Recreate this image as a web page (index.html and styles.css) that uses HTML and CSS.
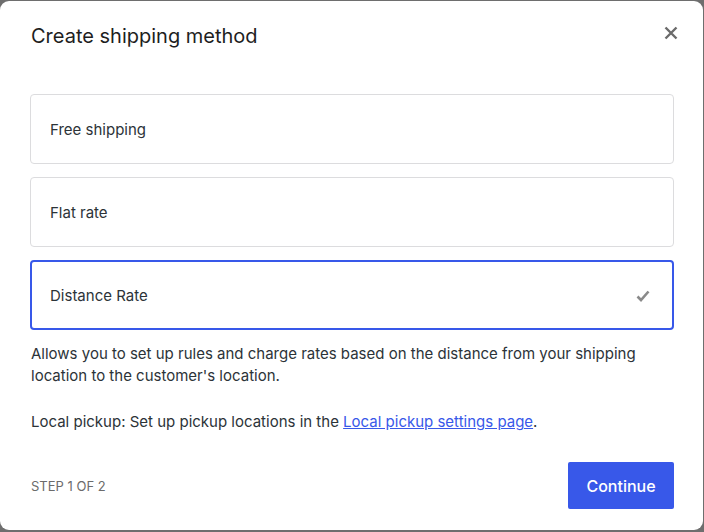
FILE: index.html
```html
<!DOCTYPE html>
<html lang="en">
<head>
<meta charset="utf-8">
<title>Create shipping method</title>
<link rel="stylesheet" href="styles.css">
</head>
<body>
<div class="modal">
  <header class="modal-header">
    <h1 class="modal-title">Create shipping method</h1>
    <button class="close" aria-label="Close">
      <svg width="24" height="24" viewBox="0 0 24 24"><path d="M6.5 6.5l11 11M17.5 6.5l-11 11" stroke="#6b6b6b" stroke-width="2.4" fill="none"/></svg>
    </button>
  </header>
  <div class="options">
    <div class="option">Free shipping</div>
    <div class="option">Flat rate</div>
    <div class="option selected">
      <span>Distance Rate</span>
      <svg class="check" width="16" height="16" viewBox="0 0 16 16"><path d="M2.5 8.5l3.5 3.5 7.5-8.5" stroke="#8a8a8a" stroke-width="2.6" fill="none"/></svg>
    </div>
  </div>
  <p class="desc">Allows you to set up rules and charge rates based on the distance from your shipping location to the customer's location.</p>
  <p class="desc pickup">Local pickup: Set up pickup locations in the <a href="#">Local pickup settings page</a>.</p>
  <footer class="modal-footer">
    <span class="step">Step 1 of 2</span>
    <button class="continue">Continue</button>
  </footer>
</div>
</body>
</html>
```
FILE: styles.css
```css
* { box-sizing: border-box; }
html, body { margin: 0; height: 100%; }
body {
  background: #6e6e6e;
  font-family: Inter, "Noto Sans", sans-serif;
  padding-top: 1px;
}
.modal {
  background: #fff;
  width: 703px;
  height: 529px;
  border-radius: 9px;
  padding: 0 29px 0 30px;
}
.modal-header {
  display: flex;
  align-items: center;
  justify-content: space-between;
  height: 70px;
}
.modal-title {
  margin: 0 0 0 1px;
  font-size: 20px;
  font-weight: 400;
  color: #1e1e1e;
}
.close {
  border: 0;
  background: none;
  padding: 0;
  width: 24px;
  height: 24px;
  margin-right: -9px;
  margin-top: -6px;
}
.options {
  margin-top: 23px;
  display: flex;
  flex-direction: column;
  gap: 13px;
}
.option {
  height: 70px;
  border: 1px solid #dcdcde;
  border-radius: 4px;
  display: flex;
  align-items: center;
  justify-content: space-between;
  padding: 0 22px 0 19px;
  font-size: 15px;
  color: #2c3338;
}
.option.selected {
  border: 2px solid #3858e9;
  padding: 0 21px 0 18px;
}
.check { margin-top: 1px; }
.desc {
  margin: 13px 0 0 1px;
  font-size: 15px;
  line-height: 22px;
  color: #2c3338;
}
.pickup { margin-top: 24px; }
.desc a { color: #3858e9; }
.modal-footer {
  display: flex;
  align-items: center;
  justify-content: space-between;
  margin-top: 29px;
}
.step {
  text-transform: uppercase;
  font-size: 13px;
  color: #6b6b6b;
  margin-left: 1px;
}
.continue {
  width: 106px;
  height: 47px;
  background: #3858e9;
  color: #fff;
  border: 0;
  border-radius: 2px;
  font-family: inherit;
  font-size: 16px;
  font-weight: 500;
}
```
